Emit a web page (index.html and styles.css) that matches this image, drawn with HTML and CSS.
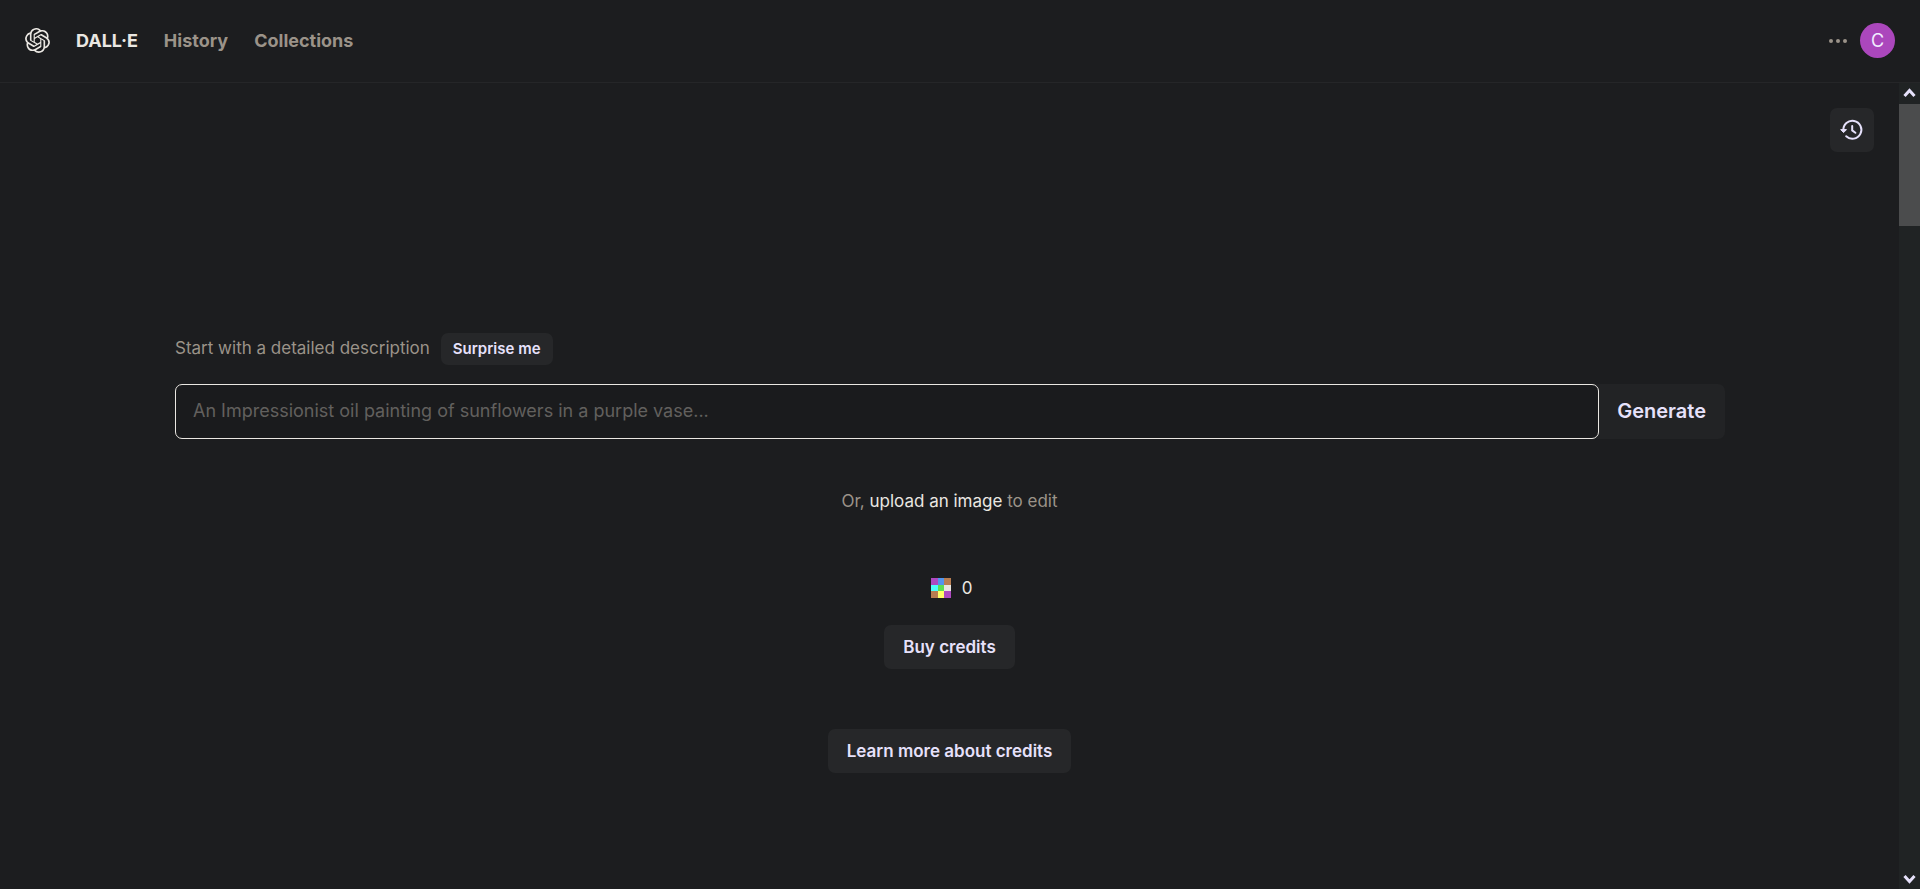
FILE: index.html
```html
<!DOCTYPE html>
<html lang="en">
<head>
  <meta charset="UTF-8">
  <meta name="viewport" content="width=device-width, initial-scale=1.0">
  <title>DALL·E</title>
  <link rel="stylesheet" href="styles.css">
</head>
<body>
  <header class="header">
    <nav class="nav">
      <a href="#" class="logo" aria-label="Home">
        <svg viewBox="0 0 24 24" width="25" height="25" fill="currentColor"><path d="M22.2819 9.8211a5.9847 5.9847 0 0 0-.5157-4.9108 6.0462 6.0462 0 0 0-6.5098-2.9A6.0651 6.0651 0 0 0 4.9807 4.1818a5.9847 5.9847 0 0 0-3.9977 2.9 6.0462 6.0462 0 0 0 .7427 7.0966 5.98 5.98 0 0 0 .511 4.9107 6.051 6.051 0 0 0 6.5146 2.9001A5.9847 5.9847 0 0 0 13.2599 24a6.0557 6.0557 0 0 0 5.7718-4.2058 5.9894 5.9894 0 0 0 3.9977-2.9001 6.0557 6.0557 0 0 0-.7475-7.0729zm-9.022 12.6081a4.4755 4.4755 0 0 1-2.8764-1.0408l.1419-.0804 4.7783-2.7582a.7948.7948 0 0 0 .3927-.6813v-6.7369l2.02 1.1686a.071.071 0 0 1 .038.052v5.5826a4.504 4.504 0 0 1-4.4945 4.4944zm-9.6607-4.1254a4.4708 4.4708 0 0 1-.5346-3.0137l.142.0852 4.783 2.7582a.7712.7712 0 0 0 .7806 0l5.8428-3.3685v2.3324a.0804.0804 0 0 1-.0332.0615L9.74 19.9502a4.4992 4.4992 0 0 1-6.1408-1.6464zM2.3408 7.8956a4.485 4.485 0 0 1 2.3655-1.9728V11.6a.7664.7664 0 0 0 .3879.6765l5.8144 3.3543-2.0201 1.1685a.0757.0757 0 0 1-.071 0l-4.8303-2.7865A4.504 4.504 0 0 1 2.3408 7.872zm16.5963 3.8558L13.1038 8.364 15.1192 7.2a.0757.0757 0 0 1 .071 0l4.8303 2.7913a4.4944 4.4944 0 0 1-.6765 8.1042v-5.6772a.79.79 0 0 0-.407-.667zm2.0107-3.0231l-.142-.0852-4.7735-2.7818a.7759.7759 0 0 0-.7854 0L9.409 9.2297V6.8974a.0662.0662 0 0 1 .0284-.0615l4.8303-2.7866a4.4992 4.4992 0 0 1 6.6802 4.66zM8.3065 12.863l-2.02-1.1638a.0804.0804 0 0 1-.038-.0567V6.0742a4.4992 4.4992 0 0 1 7.3757-3.4537l-.142.0805L8.704 5.459a.7948.7948 0 0 0-.3927.6813zm1.0976-2.3654l2.602-1.4998 2.6069 1.4998v2.9994l-2.5974 1.4997-2.6067-1.4997Z"/></svg>
      </a>
      <a href="#" class="nav-link active">DALL·E</a>
      <a href="#" class="nav-link">History</a>
      <a href="#" class="nav-link">Collections</a>
    </nav>
    <div class="account">
      <button class="more" aria-label="More">
        <svg viewBox="0 0 18 4" width="18" height="4" fill="currentColor"><circle cx="2" cy="2" r="2"/><circle cx="9" cy="2" r="2"/><circle cx="16" cy="2" r="2"/></svg>
      </button>
      <button class="avatar">C</button>
    </div>
  </header>

  <div class="content">
    <main class="main">
      <div class="toolbar">
        <button class="btn history" aria-label="Show history">
          <svg viewBox="0 0 24 24" width="24" height="24" fill="none" stroke="currentColor" stroke-width="2"><path d="M3.4 12.5A9 9 0 1 1 6.2 18.3" stroke-linecap="round"/><path d="M12.2 8v4.4l3.2 2.4" stroke-linecap="round"/><path d="M.7 11.6h5.8l-2.9 3z" fill="currentColor" stroke-width="1" stroke-linejoin="round"/></svg>
        </button>
      </div>

      <form class="prompt">
        <div class="prompt-head">
          <label for="prompt">Start with a detailed description</label>
          <button type="button" class="btn small">Surprise me</button>
        </div>
        <div class="prompt-row">
          <input type="text" id="prompt" class="prompt-input" placeholder="An Impressionist oil painting of sunflowers in a purple vase...">
          <button type="submit" class="generate">Generate</button>
        </div>
      </form>

      <p class="upload">Or, <a href="#">upload an image</a> to edit</p>

      <div class="credits">
        <div class="balance">
          <svg viewBox="0 0 20 20" width="20" height="20" shape-rendering="crispEdges">
            <rect width="7" height="7" fill="#ae4ac1"/>
            <rect x="7" width="6" height="7" fill="#5194ed"/>
            <rect x="13" width="7" height="7" fill="#b87d51"/>
            <rect y="7" width="7" height="6" fill="#4dfffb"/>
            <rect x="7" y="7" width="6" height="6" fill="#5bdd54"/>
            <rect x="13" y="7" width="7" height="6" fill="#e8e5df"/>
            <rect y="13" width="7" height="7" fill="#b87d51"/>
            <rect x="7" y="13" width="6" height="7" fill="#ffff66"/>
            <rect x="13" y="13" width="7" height="7" fill="#ae4ac1"/>
          </svg>
          <span>0</span>
        </div>
        <button class="btn">Buy credits</button>
        <button class="btn learn">Learn more about credits</button>
      </div>
    </main>

    <div class="scrollbar">
      <svg viewBox="0 0 21 21" width="21" height="21" fill="none" stroke="currentColor" stroke-width="3"><path d="M5.5 13l5-5.5 5 5.5"/></svg>
      <div class="thumb"></div>
      <svg viewBox="0 0 21 21" width="21" height="21" fill="none" stroke="currentColor" stroke-width="3"><path d="M5.5 8l5 5.5 5-5.5"/></svg>
    </div>
  </div>
</body>
</html>
```
FILE: styles.css
```css
* {
  box-sizing: border-box;
}

body {
  margin: 0;
  height: 100vh;
  display: flex;
  flex-direction: column;
  font-family: Inter, "Liberation Sans", sans-serif;
  font-size: 17px;
  color: #9b9389;
  background-color: #1c1d1f;
}

a {
  color: #eae7e2;
  text-decoration: none;
}

button {
  font-family: inherit;
  border: none;
  padding: 0;
  cursor: pointer;
}

svg {
  display: block;
}

.header {
  display: flex;
  justify-content: space-between;
  align-items: center;
  height: 83px;
  padding: 0 25px 1px;
  border-bottom: 1px solid #252628;
}

.nav {
  display: flex;
  align-items: center;
  gap: 26px;
}

.nav-link {
  font-size: 18px;
  font-weight: 700;
  color: #9b9389;
}

.nav-link.active {
  color: #eae7e2;
}

.account {
  display: flex;
  align-items: center;
  gap: 13px;
}

.more {
  color: #9b9389;
  background: none;
}

.avatar {
  width: 35px;
  height: 35px;
  border-radius: 50%;
  font-size: 18px;
  color: #f1edff;
  background-color: #ab47bc;
}

.content {
  flex: 1;
  display: flex;
  min-height: 0;
}

.main {
  flex: 1;
  display: flex;
  flex-direction: column;
}

.toolbar {
  display: flex;
  justify-content: flex-end;
  padding: 25px 25px 0;
}

.btn {
  height: 44px;
  padding: 0 19px 1px;
  border-radius: 7px;
  font-size: 17px;
  font-weight: 600;
  color: #e6e1fb;
  background-color: #262729;
}

.btn.history {
  width: 44px;
  padding: 0 10px 1px;
}

.btn.small {
  height: 32px;
  padding: 0 12px 1px;
  font-size: 15px;
}

.prompt {
  margin-top: 181px;
  padding: 0 174px 0 175px;
}

.prompt-head {
  display: flex;
  align-items: center;
  gap: 11px;
  margin-bottom: 19px;
}

.prompt-head label {
  padding-bottom: 2px;
}

.prompt-row {
  display: flex;
  height: 55px;
  border-radius: 7px;
  background-color: #222325;
}

.prompt-input {
  flex: 1;
  padding: 0 17px 2px;
  border: 1px solid #eae7e2;
  border-radius: 7px;
  outline: none;
  font-family: inherit;
  font-size: 18px;
  color: #eae7e2;
  background-color: #1a1b1d;
}

.prompt-input::placeholder {
  color: #62605e;
}

.generate {
  padding: 0 19px 1px 18px;
  font-size: 20px;
  font-weight: 600;
  color: #e6e1fb;
  background: none;
}

.upload {
  margin: 52px 0 67px;
  line-height: 20px;
  text-align: center;
}

.credits {
  display: flex;
  flex-direction: column;
  align-items: center;
}

.balance {
  display: flex;
  align-items: center;
  gap: 11px;
  margin-bottom: 27px;
  padding-left: 4px;
  line-height: 20px;
  color: #eae7e2;
}

.learn {
  margin-top: 60px;
}

.scrollbar {
  display: flex;
  flex-direction: column;
  width: 21px;
  color: #e6e1fb;
  background-color: #202324;
}

.thumb {
  height: 122px;
  margin-bottom: auto;
  background-color: #4b4c4d;
}
```
